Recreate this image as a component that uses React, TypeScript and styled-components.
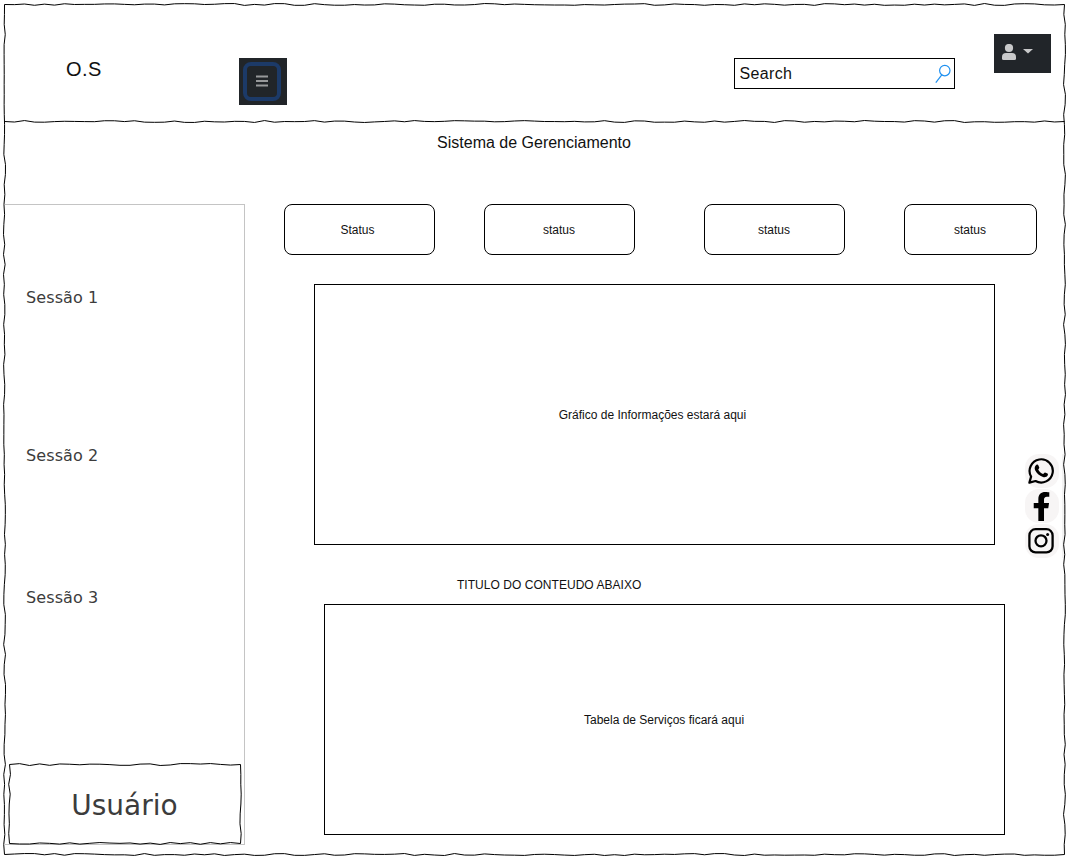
import React from "react";
import styled, { createGlobalStyle } from "styled-components";
import { FaFacebookF } from "react-icons/fa";

const GlobalStyle = createGlobalStyle`
  * { box-sizing: border-box; }
  body { margin: 0; background: #fff; color: #111; font-family: "Liberation Sans", Arial, sans-serif; }
  button { font: inherit; cursor: pointer; }
`;

/* ---------- hand-drawn lines ---------- */

type Point = [number, number];

const STEP = 10;

function wobble(seed: number) {
  let s = seed;
  return () => {
    s = (s * 1103515245 + 12345) % 2147483648;
    return (s / 2147483648 - 0.5) * 2;
  };
}

function sketchLine(from: Point, to: Point, seed: number) {
  const next = wobble(seed);
  const dx = to[0] - from[0];
  const dy = to[1] - from[1];
  const length = Math.hypot(dx, dy);
  const count = Math.round(length / STEP);
  let d = `M${from[0]} ${from[1]}`;
  for (let i = 1; i < count; i++) {
    const t = i / count;
    const off = next();
    const x = from[0] + dx * t + (dy / length) * off;
    const y = from[1] + dy * t + (dx / length) * off;
    d += `L${x.toFixed(2)} ${y.toFixed(2)}`;
  }
  return d + `L${to[0]} ${to[1]}`;
}

const SketchSvg = styled.svg`
  position: absolute;
  top: 0;
  left: 0;
  overflow: visible;
  pointer-events: none;
  fill: none;
  stroke: #000;
  stroke-width: 1;
`;

function SketchBox({ width, height, seed }: { width: number; height: number; seed: number }) {
  const w = width - 0.5;
  const h = height - 0.5;
  return (
    <SketchSvg width={width} height={height}>
      <path d={sketchLine([0.5, 0.5], [w, 0.5], seed)} />
      <path d={sketchLine([w, 0.5], [w, h], seed + 7)} />
      <path d={sketchLine([0.5, h], [w, h], seed + 13)} />
      <path d={sketchLine([0.5, 0.5], [0.5, h], seed + 29)} />
    </SketchSvg>
  );
}

/* ---------- icons ---------- */

function WhatsAppIcon() {
  return (
    <svg width="28" height="28" fill="none" stroke="#000" strokeWidth="2.2" strokeLinejoin="round">
      <path d="M2.4 25.6L4.1 19.6A11.6 11.6 0 1 1 8.5 24Z" />
      <path
        d="M9.8 7.6C10.5 7.3 11 7.5 11.3 8.2L12.3 10.5C12.5 11.1 11.2 12.4 11.3 12.7C12.3 14.6 13.8 16 16 16.9C16.5 17 17.5 15.3 18 15.4L20.5 16.6C21.2 17 21 18 20.5 18.8C19.6 20.2 17.6 20.5 16 20C12.2 18.8 9.5 16.2 8 13C7.2 11 8 8.5 9.8 7.6Z"
        fill="#000"
        stroke="none"
      />
    </svg>
  );
}

function InstagramIcon() {
  return (
    <svg width="28" height="28" fill="none" stroke="#000" strokeWidth="2.3">
      <rect x="2.4" y="2.2" width="23.2" height="23.2" rx="6.2" />
      <circle cx="14" cy="13.8" r="5.5" />
      <circle cx="20.6" cy="7.4" r="1.5" fill="#000" stroke="none" />
    </svg>
  );
}

/* ---------- layout ---------- */

const Page = styled.div`
  width: 1069px;
  height: 859px;
  padding: 4px;
  overflow: hidden;
`;

const Frame = styled.div`
  position: relative;
  width: 1061px;
  height: 851px;
  display: flex;
  flex-direction: column;
`;

const Header = styled.header`
  position: relative;
  display: flex;
  align-items: flex-start;
  height: 118px;
  flex: none;
`;

const Logo = styled.div`
  width: 173px;
  margin: 53px 0 0 62px;
  font-size: 20px;
  line-height: 24px;
  letter-spacing: 0.5px;
`;

const MenuButton = styled.button`
  display: grid;
  place-items: center;
  width: 48px;
  height: 47px;
  margin-top: 54px;
  padding: 0 2px 1px 0;
  border: 0;
  background: #212529;
`;

const MenuRing = styled.span`
  display: grid;
  place-items: center;
  width: 38px;
  height: 39px;
  border: 4px solid #1c3a68;
  border-radius: 8px;
`;

const SearchField = styled.div`
  display: flex;
  align-items: center;
  justify-content: space-between;
  width: 221px;
  height: 31px;
  margin: 54px 0 0 447px;
  padding: 0 3px 0 4.5px;
  border: 1px solid #000;
  font-size: 16px;
  line-height: 18px;
  letter-spacing: 0.35px;
`;

const UserButton = styled.button`
  display: flex;
  align-items: flex-start;
  width: 57px;
  height: 39px;
  margin: 30px 0 0 39px;
  padding: 10px 0 0 8px;
  border: 0;
  background: #212529;
`;

const Title = styled.h1`
  margin: 12px 0 0;
  padding-right: 1px;
  font-size: 16px;
  font-weight: 400;
  line-height: 18px;
  text-align: center;
`;

const Body = styled.div`
  display: flex;
  margin-top: 52px;
  padding-left: 1px;
`;

const Sidebar = styled.nav`
  display: flex;
  flex-direction: column;
  width: 240px;
  height: 641px;
  padding-top: 83px;
  border: 1px solid #c4c4c4;
  border-left: 0;
  color: #3c3c3c;
  font-family: "DejaVu Sans", Verdana, sans-serif;
`;

const SessionLink = styled.a<{ $gap: number }>`
  height: 20px;
  margin: 0 0 ${(p) => p.$gap}px 21px;
  font-size: 16px;
  line-height: 20px;
  letter-spacing: 0.1px;
`;

const UserPanel = styled.div`
  position: relative;
  display: grid;
  place-items: center;
  width: 231px;
  height: 80px;
  margin-left: 4px;
  padding-top: 3px;
  font-size: 28px;
  line-height: 34px;
`;

const Main = styled.main`
  width: 753px;
  margin-left: 39px;
`;

const StatusRow = styled.div`
  display: flex;
`;

const StatusCard = styled.div<{ $width: number; $gap: number; $shift: number }>`
  display: grid;
  place-items: center;
  width: ${(p) => p.$width}px;
  height: 51px;
  margin-right: ${(p) => p.$gap}px;
  padding-right: ${(p) => p.$shift}px;
  border: 1px solid #000;
  border-radius: 8px;
  font-size: 12px;
`;

const Panel = styled.section<{ $height: number; $top: number; $left: number; $shift: number }>`
  display: grid;
  place-items: center;
  width: 681px;
  height: ${(p) => p.$height}px;
  margin: ${(p) => p.$top}px 0 0 ${(p) => p.$left}px;
  padding-right: ${(p) => p.$shift}px;
  border: 1px solid #000;
  font-size: 12px;
`;

const SectionTitle = styled.h2`
  margin: 33px 0 0 173px;
  font-size: 12px;
  font-weight: 400;
  line-height: 14px;
  letter-spacing: 0.04px;
`;

const SocialRail = styled.aside`
  position: absolute;
  top: 450px;
  left: 1021px;
  display: flex;
  flex-direction: column;
  gap: 1px;
  width: 39px;
  border-right: 2px solid #f3f3f3;
`;

const SocialLink = styled.a`
  display: grid;
  place-items: center;
  width: 34px;
  height: 34px;
  padding-right: 2px;
  border-radius: 14px;
  background: #f7f5f5;
  color: #000;
`;

const cards = [
  { label: "Status", width: 151, gap: 49, shift: 4 },
  { label: "status", width: 151, gap: 69, shift: 1 },
  { label: "status", width: 141, gap: 59, shift: 1 },
  { label: "status", width: 133, gap: 0, shift: 1 },
];

const sessions = [
  { label: "Sessão 1", gap: 138 },
  { label: "Sessão 2", gap: 122 },
  { label: "Sessão 3", gap: 156 },
];

export default function App() {
  return (
    <Page>
      <GlobalStyle />
      <Frame>
        <Header>
          <Logo>O.S</Logo>
          <MenuButton aria-label="Menu">
            <MenuRing>
              <svg width="12" height="12" stroke="#97999b" strokeWidth="2">
                <path d="M0 1.5H12M0 6H12M0 10.5H12" />
              </svg>
            </MenuRing>
          </MenuButton>
          <SearchField>
            <span>Search</span>
            <svg width="16" height="20" fill="none" stroke="#1e90f0" strokeWidth="1.2">
              <circle cx="9.8" cy="6.6" r="5.2" />
              <path d="M6.8 10.9L0.8 18.6" />
            </svg>
          </SearchField>
          <UserButton aria-label="Conta">
            <svg width="34" height="16" fill="#c8c9ca">
              <circle cx="7" cy="4" r="4.1" />
              <path d="M0 14.5V13Q0 9 4 9H10Q14 9 14 13V14.5Q14 16 12.5 16H1.5Q0 16 0 14.5Z" />
              <path d="M21 5H31L26 9.5Z" />
            </svg>
          </UserButton>
          <SketchSvg width="1061" height="118">
            <path d={sketchLine([0.5, 117.5], [1060.5, 117.5], 91)} />
          </SketchSvg>
        </Header>
        <Title>Sistema de Gerenciamento</Title>
        <Body>
          <Sidebar>
            {sessions.map((s) => (
              <SessionLink key={s.label} $gap={s.gap}>{s.label}</SessionLink>
            ))}
            <UserPanel>
              Usuário
              <SketchBox width={232} height={80} seed={41} />
            </UserPanel>
          </Sidebar>
          <Main>
            <StatusRow>
              {cards.map((c, i) => (
                <StatusCard key={i} $width={c.width} $gap={c.gap} $shift={c.shift}>{c.label}</StatusCard>
              ))}
            </StatusRow>
            <Panel $height={261} $top={29} $left={30} $shift={4}>Gráfico de Informações estará aqui</Panel>
            <SectionTitle>TITULO DO CONTEUDO ABAIXO</SectionTitle>
            <Panel $height={231} $top={12} $left={40} $shift={1}>Tabela de Serviços ficará aqui</Panel>
          </Main>
        </Body>
        <SocialRail>
          <SocialLink aria-label="WhatsApp"><WhatsAppIcon /></SocialLink>
          <SocialLink aria-label="Facebook"><FaFacebookF size={29} /></SocialLink>
          <SocialLink aria-label="Instagram"><InstagramIcon /></SocialLink>
        </SocialRail>
        <SketchBox width={1061} height={851} seed={5} />
      </Frame>
    </Page>
  );
}
